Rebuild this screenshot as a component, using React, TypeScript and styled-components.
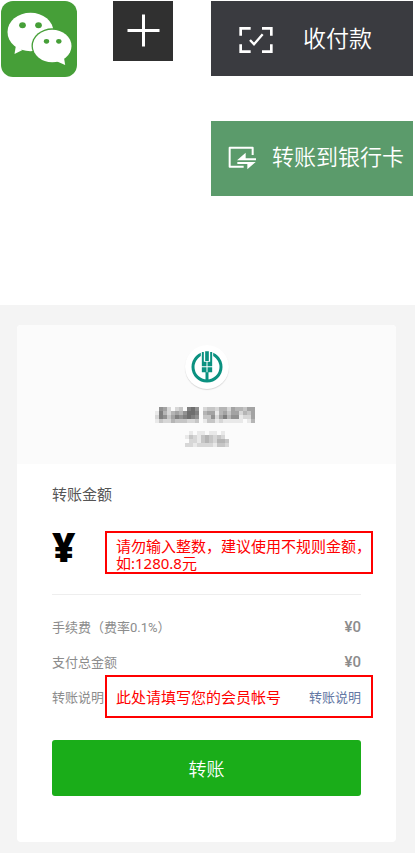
import React from "react";
import styled, { createGlobalStyle } from "styled-components";

const GlobalStyle = createGlobalStyle`
  * { box-sizing: border-box; }
  body {
    margin: 0;
    background: #fff;
    font-family: Roboto, "Noto Sans CJK SC", sans-serif;
  }
  svg { display: block; }
`;

const Page = styled.div`
  min-height: 100vh;
  display: flex;
  flex-direction: column;
`;

const Steps = styled.header`
  display: grid;
  grid-template-columns: 112px 98px 1fr;
  align-items: start;
  padding: 1px 2px 109px 1px;
`;

const IconButton = styled.button<{ $size: number; $bg: string; $radius: number }>`
  width: ${(p) => p.$size}px;
  height: ${(p) => p.$size}px;
  padding: 0;
  border: 0;
  border-radius: ${(p) => p.$radius}px;
  background: ${(p) => p.$bg};
  overflow: hidden;
`;

const MenuColumn = styled.nav`
  display: flex;
  flex-direction: column;
  gap: 45px;
`;

const MenuButton = styled.button<{ $bg: string; $pad: string; $gap: number; $text: number }>`
  display: flex;
  align-items: center;
  gap: ${(p) => p.$gap}px;
  height: 75px;
  padding: ${(p) => p.$pad};
  border: 0;
  background: ${(p) => p.$bg};
  color: #fff;
  font-family: inherit;
  font-size: ${(p) => p.$text}px;
  font-weight: 350;
  line-height: 32px;
  white-space: nowrap;
  svg { flex: none; }
`;

const Transfer = styled.main`
  flex: 1;
  padding: 20px 19px 11px 17px;
  background: #f4f4f4;
`;

const Card = styled.form`
  border-radius: 4px;
  background: #fff;
  overflow: hidden;
`;

const Payee = styled.section`
  display: flex;
  flex-direction: column;
  align-items: center;
  gap: 8px;
  height: 139px;
  padding-top: 20px;
  background: #fbfbfb;
`;

const BankBadge = styled.div`
  width: 44px;
  height: 44px;
  margin-bottom: 10px;
  padding: 6px;
  border-radius: 50%;
  background: #fff;
  box-shadow: 0 1px 1px rgba(0, 0, 0, 0.14);
`;

const Fields = styled.div`
  padding: 20px 35px 46px;
`;

const AmountLabel = styled.label`
  display: block;
  color: #555;
  font-size: 15px;
  line-height: 22px;
`;

const AmountRow = styled.div`
  display: grid;
  grid-template-columns: 53px 1fr;
  align-items: center;
  height: 89px;
  padding-top: 4px;
  border-bottom: 1px solid #eee;
`;

const Currency = styled.span`
  padding-bottom: 10px;
  color: #000;
  font-family: "Open Sans", sans-serif;
  font-size: 40px;
  font-weight: 800;
  line-height: 44px;
`;

const RedBox = styled.div`
  display: flex;
  align-items: center;
  height: 43px;
  margin-right: -12px;
  border: 2px solid #f00;
`;

const AmountInput = styled.textarea`
  display: block;
  width: 100%;
  height: 39px;
  padding: 5px 0 0 9px;
  border: 0;
  outline: 0;
  resize: none;
  overflow: hidden;
  white-space: pre;
  background: transparent;
  color: #f00;
  font-family: "Noto Sans", "Noto Sans CJK SC", sans-serif;
  font-size: 15px;
  line-height: 17px;
`;

const NoteInput = styled.input`
  flex: 1;
  min-width: 0;
  padding: 0 0 0 9px;
  border: 0;
  outline: 0;
  background: transparent;
  color: #f00;
  font-family: "Noto Sans CJK SC", sans-serif;
  font-size: 15px;
  line-height: 22px;
`;

const Fees = styled.dl`
  margin: 14px 0 0;
`;

const FeeRow = styled.div`
  display: flex;
  align-items: center;
  justify-content: space-between;
  height: 35px;
`;

const FeeName = styled.dt`
  color: #8c8c8c;
  font-size: 13px;
`;

const FeeValue = styled.dd`
  margin: 0;
  color: #8c8c8c;
  font-size: 15px;
  font-weight: 500;
`;

const NoteRow = styled.div`
  display: grid;
  grid-template-columns: 53px 1fr;
  align-items: center;
  margin: -4px 0 22px;
`;

const NoteLabel = styled.label`
  color: #8c8c8c;
  font-size: 13px;
  white-space: nowrap;
`;

const NoteLink = styled.a`
  padding-right: 10px;
  color: #6478a4;
  font-size: 13px;
  text-decoration: none;
  white-space: nowrap;
`;

const Submit = styled.button`
  display: block;
  width: 100%;
  height: 56px;
  border: 0;
  border-radius: 3px;
  background: #1aad19;
  color: #fff;
  font-family: inherit;
  font-size: 18px;
  font-weight: 350;
`;

const WeChatLogo = () => (
  <svg width="76" height="76" viewBox="3 3 225 228" aria-hidden="true">
    <path d="M46 138 L42 162 L66 150 Z" fill="#fff" />
    <ellipse cx="90" cy="96" rx="69" ry="58" fill="#fff" />
    <ellipse cx="155" cy="138" rx="62" ry="53" fill="#469f38" />
    <path d="M168 184 L194 195 L190 170 Z" fill="#fff" />
    <ellipse cx="155" cy="138" rx="58" ry="49" fill="#fff" />
    <g fill="#469f38">
      <ellipse cx="66" cy="76" rx="10" ry="9" />
      <ellipse cx="114" cy="76" rx="10" ry="9" />
      <ellipse cx="138" cy="124" rx="8" ry="7" />
      <ellipse cx="175" cy="124" rx="8" ry="7" />
    </g>
  </svg>
);

const PlusIcon = () => (
  <svg width="60" height="60" viewBox="0 0 60 60" fill="none" stroke="#fff" strokeWidth="3" aria-hidden="true">
    <path d="M14.5 29.5h32M30.5 13.5v32" />
  </svg>
);

const PayIcon = () => (
  <svg width="34" height="28" viewBox="118 75 102 84" fill="none" stroke="#fff" aria-hidden="true">
    <path d="M123 104V82h30M187 82h28v22M215 130v22h-28M153 152h-30v-22" strokeWidth="8" />
    <path d="M151 117l12 13 26-30" strokeWidth="7" />
  </svg>
);

const BankTransferIcon = () => (
  <svg width="29" height="24" viewBox="85 104 87 72" aria-hidden="true">
    <path d="M132 166H90v-57h69v22" fill="none" stroke="#fff" strokeWidth="6" strokeLinejoin="round" />
    <path d="M112 147l26-23v17h31v6zM113 152h55l-25 22v-16h-30z" fill="#fff" />
  </svg>
);

const BankLogo = () => (
  <svg width="32" height="32" viewBox="571.5 167 96 96" aria-hidden="true">
    <circle cx="619.5" cy="215" r="42" fill="none" stroke="#0b9180" strokeWidth="9" />
    <path d="M601 162h37v40h-37z" fill="#fff" />
    <path
      d="M614 168h11v29h-11zM604 170h6v29h8v14h-14zM635 170h-6v29h-8v14h14zM604 216h14v15h-14zM621 216h14v15h-14zM615 231h9v29h-9z"
      fill="#0b9180"
    />
  </svg>
);

const nameCells = [
  "06520230786023324425443550",
  "17424546887045514535524350",
  "27635767876033625746612250",
  "13224333223013312111110140",
];
const holderCells = ["01011011010", "13213432320", "02213432443", "22122221332"];

const Mosaic = ({ cells, label }: { cells: string[]; label: string }) => (
  <svg
    width={cells[0].length * 4}
    height="16"
    viewBox={`0 0 ${cells[0].length * 4} 16`}
    shapeRendering="crispEdges"
    role="img"
    aria-label={label}
  >
    {cells.flatMap((row, y) =>
      row.split("").map((v, x) => (
        <rect key={`${x}-${y}`} x={x * 4} y={y * 4} width="4" height="4" fill="#000" fillOpacity={Number(v) * 0.07} />
      ))
    )}
  </svg>
);

const fees = [
  { name: "手续费（费率0.1%）", value: "¥0" },
  { name: "支付总金额", value: "¥0" },
];

export default function App() {
  return (
    <Page lang="zh-CN">
      <GlobalStyle />
      <Steps>
        <IconButton type="button" aria-label="微信" $size={76} $bg="#469f38" $radius={12}>
          <WeChatLogo />
        </IconButton>
        <IconButton type="button" aria-label="添加" $size={60} $bg="#303030" $radius={0}>
          <PlusIcon />
        </IconButton>
        <MenuColumn>
          <MenuButton type="button" $bg="#3a3b40" $pad="2px 0 0 28px" $gap={30} $text={23}>
            <PayIcon />
            收付款
          </MenuButton>
          <MenuButton type="button" $bg="#5b9b6b" $pad="0 0 2px 17px" $gap={15} $text={22}>
            <BankTransferIcon />
            转账到银行卡
          </MenuButton>
        </MenuColumn>
      </Steps>
      <Transfer>
        <Card onSubmit={(e) => e.preventDefault()}>
          <Payee>
            <BankBadge>
              <BankLogo />
            </BankBadge>
            <Mosaic cells={nameCells} label="银行账户" />
            <Mosaic cells={holderCells} label="户名" />
          </Payee>
          <Fields>
            <AmountLabel htmlFor="amount">转账金额</AmountLabel>
            <AmountRow>
              <Currency>¥</Currency>
              <RedBox>
                <AmountInput id="amount" rows={2} defaultValue={"请勿输入整数，建议使用不规则金额，\n如:1280.8元"} />
              </RedBox>
            </AmountRow>
            <Fees>
              {fees.map((fee) => (
                <FeeRow key={fee.name}>
                  <FeeName>{fee.name}</FeeName>
                  <FeeValue>{fee.value}</FeeValue>
                </FeeRow>
              ))}
            </Fees>
            <NoteRow>
              <NoteLabel htmlFor="note">转账说明</NoteLabel>
              <RedBox>
                <NoteInput id="note" defaultValue="此处请填写您的会员帐号" />
                <NoteLink href="#note">转账说明</NoteLink>
              </RedBox>
            </NoteRow>
            <Submit type="submit">转账</Submit>
          </Fields>
        </Card>
      </Transfer>
    </Page>
  );
}
